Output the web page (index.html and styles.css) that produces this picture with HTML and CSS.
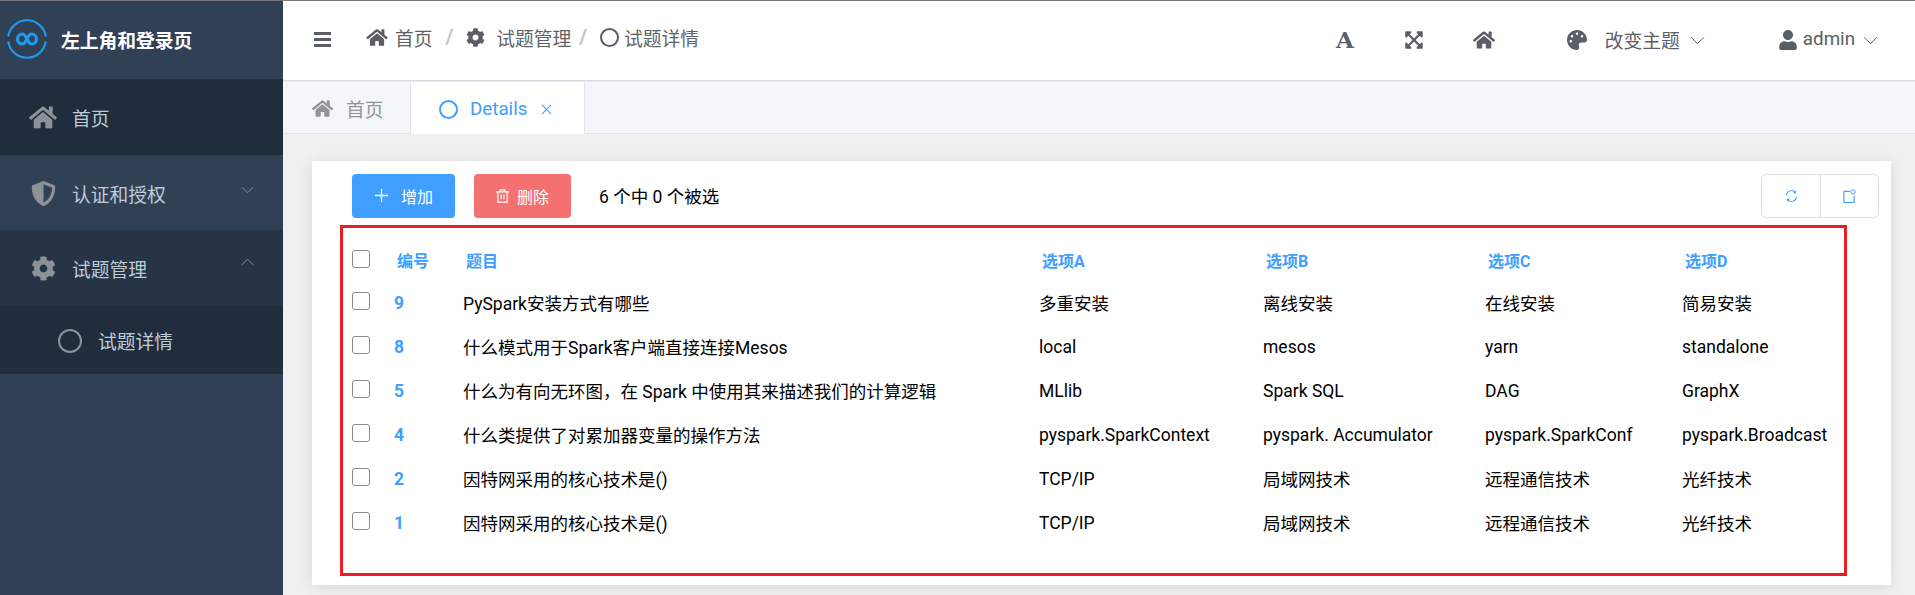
FILE: index.html
```html
<!DOCTYPE html>
<html lang="zh-CN">
<head>
  <meta charset="UTF-8" />
  <title>试题详情</title>
  <link rel="stylesheet" href="styles.css">
</head>
<body>
  <svg class="sprites" xmlns="http://www.w3.org/2000/svg">
    <symbol id="i-home" viewBox="0 0 576 512"><path d="M280.37 148.26L96 300.11V464a16 16 0 0 0 16 16l112.06-.29a16 16 0 0 0 15.92-16V368a16 16 0 0 1 16-16h64a16 16 0 0 1 16 16v95.64a16 16 0 0 0 16 16.05L464 480a16 16 0 0 0 16-16V300L295.67 148.26a12.19 12.19 0 0 0-15.3 0zM571.6 251.47L488 182.56V44.05a12 12 0 0 0-12-12h-56a12 12 0 0 0-12 12v72.61L318.47 43a48 48 0 0 0-61 0L4.34 251.47a12 12 0 0 0-1.6 16.9l25.5 31A12 12 0 0 0 45.15 301l235.22-193.74a12.19 12.19 0 0 1 15.3 0L530.9 301a12 12 0 0 0 16.9-1.6l25.5-31a12 12 0 0 0-1.7-16.93z"/></symbol>
    <symbol id="i-cog" viewBox="0 0 512 512"><path d="M487.4 315.7l-42.6-24.6c4.3-23.2 4.3-47 0-70.2l42.6-24.6c4.9-2.8 7.1-8.6 5.5-14-11.1-35.6-30-67.8-54.7-94.6-3.8-4.1-10-5.1-14.8-2.3L380.8 110c-17.9-15.4-38.5-27.3-60.8-35.1V25.8c0-5.6-3.9-10.5-9.4-11.7-36.7-8.2-74.3-7.8-109.2 0-5.5 1.2-9.4 6.1-9.4 11.7V75c-22.2 7.9-42.8 19.8-60.8 35.1L88.7 85.5c-4.9-2.8-11-1.9-14.8 2.3-24.7 26.7-43.6 58.9-54.7 94.6-1.7 5.4.6 11.2 5.5 14L67.3 221c-4.3 23.2-4.3 47 0 70.2l-42.6 24.6c-4.9 2.8-7.1 8.6-5.5 14 11.1 35.6 30 67.8 54.7 94.6 3.8 4.1 10 5.1 14.8 2.3l42.6-24.6c17.9 15.4 38.5 27.3 60.8 35.1v49.2c0 5.6 3.9 10.5 9.4 11.7 36.7 8.2 74.3 7.8 109.2 0 5.5-1.2 9.4-6.1 9.4-11.7v-49.2c22.2-7.9 42.8-19.8 60.8-35.1l42.6 24.6c4.9 2.8 11 1.9 14.8-2.3 24.7-26.7 43.6-58.9 54.7-94.6 1.5-5.5-.7-11.3-5.6-14.1zM256 336c-44.1 0-80-35.9-80-80s35.9-80 80-80 80 35.9 80 80-35.9 80-80 80z"/></symbol>
    <symbol id="i-shield" viewBox="0 0 512 512"><path d="M466.5 83.7l-192-80a48.15 48.15 0 0 0-36.9 0l-192 80C27.7 91.1 16 108.6 16 128c0 198.5 114.5 335.7 221.5 380.3 11.8 4.9 25.1 4.9 36.9 0C360.1 472.6 496 349.3 496 128c0-19.4-11.7-36.9-29.5-44.3zM256.1 446.3l-.1-381 175.9 73.3c-3.3 151.4-82.1 261.1-175.8 307.7z"/></symbol>
    <symbol id="i-chevron" viewBox="0 0 16 10"><path d="M1 1.5l7 7 7-7" fill="none" stroke="currentColor" stroke-width="1.1"/></symbol>
  </svg>

  <div class="topline"></div>
  <div class="app">
    <aside class="sidebar">
      <div class="logo">
        <svg class="logo-mark" viewBox="0 0 40 40">
          <path d="M1.2 17.500A19 19 0 0 1 38.800 17.500M38.800 22.500A19 19 0 0 1 1.200 22.500" fill="none" stroke="#1e9bf0" stroke-width="2"/>
          <path d="M20 20c-1.500-3-2.500-5-4.500-5a5 5 0 0 0 0 10c2 0 3-2 4.500-5s2.500-5 4.500-5a5 5 0 0 1 0 10c-2 0-3-2-4.500-5z" fill="none" stroke="#1e9bf0" stroke-width="3.200"/>
        </svg>
        <span class="logo-title">左上角和登录页</span>
      </div>
      <nav>
        <div class="menu-item active">
          <svg class="menu-icon home"><use href="#i-home"/></svg>
          <span>首页</span>
        </div>
        <div class="menu-item">
          <svg class="menu-icon"><use href="#i-shield"/></svg>
          <span>认证和授权</span>
          <svg class="menu-arrow"><use href="#i-chevron"/></svg>
        </div>
        <div class="menu-item open">
          <svg class="menu-icon"><use href="#i-cog"/></svg>
          <span>试题管理</span>
          <svg class="menu-arrow up"><use href="#i-chevron"/></svg>
        </div>
        <div class="menu-sub">
          <span class="ring"></span>
          <span>试题详情</span>
        </div>
      </nav>
    </aside>

    <main class="main">
      <header class="navbar">
        <div class="hamburger"><i></i><i></i><i></i></div>
        <div class="crumbs">
          <svg class="crumb-home"><use href="#i-home"/></svg>
          <span class="crumb-text">首页</span>
          <span class="crumb-sep">/</span>
          <svg class="crumb-cog"><use href="#i-cog"/></svg>
          <span class="crumb-text cog-text">试题管理</span>
          <span class="crumb-sep sep-2">/</span>
          <span class="crumb-ring"></span>
          <span class="crumb-text ring-text">试题详情</span>
        </div>
        <div class="nav-right">
          <span class="font-btn">A</span>
          <svg class="nav-icon expand" viewBox="0 0 448 512"><path d="M448 344v112a23.94 23.94 0 0 1-24 24H312c-21.39 0-32.09-25.9-17-41l36.2-36.2L224 295.6 116.77 402.9 153 439c15.09 15.1 4.39 41-17 41H24a23.94 23.94 0 0 1-24-24V344c0-21.4 25.89-32.1 41-17l36.19 36.2L184.46 256 77.18 148.7 41 185c-15.1 15.1-41 4.4-41-17V56a23.94 23.94 0 0 1 24-24h112c21.39 0 32.09 25.9 17 41l-36.2 36.2L224 216.4l107.23-107.3L295 73c-15.09-15.1-4.39-41 17-41h112a23.94 23.94 0 0 1 24 24v112c0 21.4-25.89 32.1-41 17l-36.19-36.2L263.54 256l107.28 107.3L407 327.1c15.1-15.2 41-4.5 41 16.9z"/></svg>
          <svg class="nav-icon nav-home"><use href="#i-home"/></svg>
          <svg class="nav-icon palette" viewBox="0 0 512 512"><path d="M204.3 5C104.9 24.4 24.8 104.3 5.2 203.4c-37 187 131.7 326.4 258.8 306.7 41.2-6.4 61.4-54.6 42.5-91.7-23.1-45.4 9.9-98.4 60.9-98.4h79.7c35.8 0 64.8-29.6 64.9-65.3C511.5 97.1 368.1-26.9 204.3 5zM96 320c-17.7 0-32-14.3-32-32s14.3-32 32-32 32 14.3 32 32-14.3 32-32 32zm32-128c-17.7 0-32-14.3-32-32s14.3-32 32-32 32 14.3 32 32-14.3 32-32 32zm128-64c-17.7 0-32-14.3-32-32s14.3-32 32-32 32 14.3 32 32-14.3 32-32 32zm128 64c-17.7 0-32-14.3-32-32s14.3-32 32-32 32 14.3 32 32-14.3 32-32 32z"/></svg>
          <span class="nav-text theme">改变主题</span>
          <svg class="nav-arrow theme-arrow"><use href="#i-chevron"/></svg>
          <svg class="nav-icon user" viewBox="0 0 448 512"><path d="M224 256c70.700 0 128-57.300 128-128S294.700 0 224 0 96 57.300 96 128s57.300 128 128 128zm89.600 32h-16.700c-22.200 10.200-46.900 16-72.900 16s-50.600-5.800-72.900-16h-16.700C60.200 288 0 348.200 0 422.400V464c0 26.500 21.500 48 48 48h352c26.500 0 48-21.500 48-48v-41.600c0-74.200-60.200-134.400-134.400-134.400z"/></svg>
          <span class="nav-text admin">admin</span>
          <svg class="nav-arrow"><use href="#i-chevron"/></svg>
        </div>
      </header>

      <div class="tabs">
        <div class="tab">
          <svg class="tab-home"><use href="#i-home"/></svg>
          <span>首页</span>
        </div>
        <div class="tab current">
          <span class="tab-ring"></span>
          <span>Details</span>
          <svg class="tab-close" viewBox="0 0 12 12"><path d="M1 1l10 10M11 1L1 11" stroke="currentColor" stroke-width="1.1"/></svg>
        </div>
      </div>

      <section class="content">
        <div class="card">
          <div class="toolbar">
            <button class="btn btn-add">
              <svg class="btn-icon" viewBox="0 0 14 14"><path d="M7 0v14M0 7h14" stroke="#fff" stroke-width="1.4"/></svg>
              <span>增加</span>
            </button>
            <button class="btn btn-del">
              <svg class="btn-icon" viewBox="0 0 14 15"><path d="M0 3h14M4.500 3V1h5v2M2 3v11h10V3M5.500 6v5M8.500 6v5" fill="none" stroke="#fff" stroke-width="1.300"/></svg>
              <span>删除</span>
            </button>
            <span class="selected">6 个中 0 个被选</span>
            <div class="tools">
              <button class="tool">
                <svg viewBox="0 0 14 14"><path d="M1.500 6A5.500 5.500 0 0 1 11 3M12.500 8A5.500 5.500 0 0 1 3 11" fill="none" stroke="#409eff" stroke-width="1.100"/><path d="M11.800 0.800v3.200H8.600zM2.200 13.200V10h3.200z" fill="#409eff"/></svg>
              </button>
              <button class="tool">
                <svg viewBox="0 0 14 15"><path d="M7.500 2.500H1v12h11V7" fill="none" stroke="#409eff" stroke-width="1.200"/><circle cx="10.800" cy="3" r="2.300" fill="none" stroke="#409eff" stroke-width="1"/></svg>
              </button>
            </div>
          </div>

          <div class="table-box">
            <table class="list">
              <colgroup>
                <col class="c-check"><col class="c-id"><col class="c-title"><col class="c-a"><col class="c-b"><col class="c-c"><col class="c-d">
              </colgroup>
              <thead>
                <tr>
                  <th><input type="checkbox" class="check"></th>
                  <th>编号</th><th>题目</th><th>选项A</th><th>选项B</th><th>选项C</th><th>选项D</th>
                </tr>
              </thead>
              <tbody>
                <tr>
                  <td><input type="checkbox" class="check"></td>
                  <td class="num">9</td><td>PySpark安装方式有哪些</td><td>多重安装</td><td>离线安装</td><td>在线安装</td><td>简易安装</td>
                </tr>
                <tr>
                  <td><input type="checkbox" class="check"></td>
                  <td class="num">8</td><td>什么模式用于Spark客户端直接连接Mesos</td><td>local</td><td>mesos</td><td>yarn</td><td>standalone</td>
                </tr>
                <tr>
                  <td><input type="checkbox" class="check"></td>
                  <td class="num">5</td><td>什么为有向无环图，在 Spark 中使用其来描述我们的计算逻辑</td><td>MLlib</td><td>Spark SQL</td><td>DAG</td><td>GraphX</td>
                </tr>
                <tr>
                  <td><input type="checkbox" class="check"></td>
                  <td class="num">4</td><td>什么类提供了对累加器变量的操作方法</td><td>pyspark.SparkContext</td><td>pyspark. Accumulator</td><td>pyspark.SparkConf</td><td>pyspark.Broadcast</td>
                </tr>
                <tr>
                  <td><input type="checkbox" class="check"></td>
                  <td class="num">2</td><td>因特网采用的核心技术是()</td><td>TCP/IP</td><td>局域网技术</td><td>远程通信技术</td><td>光纤技术</td>
                </tr>
                <tr>
                  <td><input type="checkbox" class="check"></td>
                  <td class="num">1</td><td>因特网采用的核心技术是()</td><td>TCP/IP</td><td>局域网技术</td><td>远程通信技术</td><td>光纤技术</td>
                </tr>
              </tbody>
            </table>
          </div>
        </div>
      </section>
    </main>
  </div>
</body>
</html>
```

FILE: styles.css
```css
* {
  box-sizing: border-box;
}
html, body {
  height: 595px;
  overflow: hidden;
}
body {
  margin: 0;
  font-family: Roboto, "Noto Sans CJK SC", sans-serif;
  font-size: 17.5px;
  background: #f0f0f0;
}
.sprites {
  display: none;
}
svg {
  fill: currentColor;
  flex: none;
}
.topline {
  height: 1px;
  background: #777;
}
.app {
  display: flex;
  height: 594px;
}

/* sidebar */
.sidebar {
  width: 283px;
  flex: none;
  background: #304156;
}
.logo {
  height: 78px;
  display: flex;
  align-items: center;
  padding: 0 0 2px 7px;
}
.logo-mark {
  width: 40px;
  height: 40px;
}
.logo-title {
  margin-left: 14px;
  color: #fff;
  font-size: 18.75px;
  font-weight: 700;
}
.menu-item {
  height: 75.500px;
  display: flex;
  align-items: center;
  padding: 2px 0 0 32px;
  color: #bfcbd9;
  font-size: 18.75px;
}
.menu-item.active {
  background: #1f2d3d;
}
.menu-item.open {
  background: #263445;
}
.menu-icon {
  width: 25px;
  height: 25px;
  margin-left: -1px;
  margin-right: 16px;
  color: #8d9299;
}
.menu-icon.home {
  width: 28px;
  margin-left: -3px;
  margin-right: 15px;
}
.menu-arrow {
  width: 13px;
  height: 8px;
  margin-left: auto;
  margin-right: 29px;
  color: #8d97a5;
  margin-top: -6px;
}
.menu-arrow.up {
  transform: rotate(180deg);
  margin-top: -14px;
}
.menu-sub {
  height: 68px;
  display: flex;
  align-items: center;
  padding: 2px 0 0 58px;
  background: #1f2d3d;
  color: #bfcbd9;
  font-size: 18.75px;
}
.ring {
  width: 24px;
  height: 24px;
  margin-right: 16px;
  border: 2px solid #8d9299;
  border-radius: 50%;
}

/* navbar */
.main {
  flex: 1;
  min-width: 0;
}
.navbar {
  height: 80px;
  display: flex;
  align-items: center;
  padding-left: 31px;
  background: #fff;
  border-bottom: 1px solid #d8dce5;
  color: #5a5e66;
  font-size: 18.75px;
}
.hamburger {
  width: 17px;
  margin-top: 1px;
}
.hamburger i {
  display: block;
  height: 3px;
  margin-bottom: 3px;
  background: #5a5e66;
}
.crumbs {
  display: flex;
  align-items: center;
  margin-top: -7px;
  margin-left: 35px;
}
.crumb-home {
  width: 22px;
  height: 19px;
}
.crumb-text {
  margin-left: 7px;
  color: #606266;
}
.crumb-sep {
  margin-left: 13px;
  color: #c0c4cc;
  font-size: 21px;
  font-weight: 700;
}
.crumb-cog {
  width: 19px;
  height: 19px;
  margin-left: 13px;
}
.cog-text {
  margin-left: 11px;
}
.sep-2 {
  margin-left: 8px;
}
.crumb-ring {
  width: 19px;
  height: 19px;
  margin-left: 13px;
  border: 2px solid #5a5e66;
  border-radius: 50%;
}
.ring-text {
  margin-left: 5px;
}
.nav-right {
  display: flex;
  align-items: center;
  margin-left: auto;
  margin-top: -1px;
  padding-right: 37px;
}
.font-btn {
  width: 20px;
  font-family: "DejaVu Serif", serif;
  font-size: 23px;
  font-weight: 700;
  line-height: 24px;
  text-align: center;
}
.nav-icon {
  height: 20px;
}
.nav-text {
  margin-bottom: 2px;
}
.expand {
  width: 18px;
  margin-left: 50px;
}
.nav-home {
  width: 22px;
  margin-left: 50px;
}
.palette {
  width: 20px;
  margin-left: 72px;
}
.theme {
  margin-left: 18px;
}
.nav-arrow {
  width: 15px;
  height: 9px;
  margin-left: 8px;
  color: #5a5e66;
}
.theme-arrow {
  margin-left: 10px;
}
.user {
  width: 18px;
  margin-left: 74px;
}
.admin {
  margin-left: 6px;
}

/* tabs */
.tabs {
  height: 53px;
  display: flex;
  background: #f5f6fa;
  border-top: 1px solid #e9ebf1;
  border-bottom: 1px solid #dfe4ed;
}
.tab {
  width: 127px;
  display: flex;
  align-items: center;
  padding: 2px 0 0 29px;
  color: #909399;
  font-size: 18.75px;
}
.tab.current {
  width: 175px;
  padding-left: 28px;
  margin-bottom: -1px;
  background: #fff;
  color: #409eff;
  border-left: 1px solid #dfe4ed;
  border-right: 1px solid #dfe4ed;
}
.tab-home {
  width: 21px;
  height: 19px;
  margin-right: 13px;
}
.tab-ring {
  width: 19px;
  height: 19px;
  margin-right: 12px;
  border: 2px solid #409eff;
  border-radius: 50%;
}
.tab-close {
  width: 11px;
  height: 11px;
  margin-left: 14px;
}

/* card */
.content {
  padding: 27px 24px 0 29px;
}
.card {
  height: 424px;
  padding-top: 13px;
  background: #fff;
  box-shadow: 0 2px 14px rgba(0, 0, 0, 0.1);
}
.toolbar {
  height: 44px;
  display: flex;
  align-items: center;
  padding: 0 12px 0 40px;
}
.btn {
  height: 44px;
  display: flex;
  align-items: center;
  padding-bottom: 2px;
  border: none;
  border-radius: 4px;
  color: #fff;
  font-family: inherit;
  font-size: 16px;
}
.btn-add {
  width: 103px;
  padding-left: 23px;
  background: #409eff;
}
.btn-add .btn-icon {
  width: 13px;
  height: 13px;
  margin-right: 13px;
}
.btn-del {
  width: 97px;
  margin-left: 19px;
  padding-left: 22px;
  background: #f56c6c;
  opacity: 0.97;
}
.btn-del .btn-icon {
  width: 13px;
  height: 14px;
  margin-right: 8px;
}
.selected {
  margin-left: 28px;
  margin-bottom: 2px;
  color: #000;
}
.tools {
  display: flex;
  margin-left: auto;
  height: 44px;
  border: 1.500px solid #dcdfe6;
  border-radius: 5px;
}
.tool {
  width: 58px;
  display: flex;
  align-items: center;
  justify-content: center;
  padding: 0;
  border: none;
  background: none;
}
.tool + .tool {
  border-left: 1.500px solid #dcdfe6;
}
.tool svg {
  width: 13px;
  height: 14px;
}

/* red box with the table */
.table-box {
  height: 351px;
  margin: 7px 44px 0 28px;
  padding-top: 9px;
  border: 3px solid #ed1c24;
}
.list {
  width: 1500px;
  border-collapse: collapse;
  table-layout: fixed;
}
.c-check { width: 42px; }
.c-id { width: 69px; }
.c-title { width: 576px; }
.c-a { width: 224px; }
.c-b { width: 222px; }
.c-c { width: 197px; }
.c-d { width: 170px; }
.list th, .list td {
  height: 44px;
  padding: 0 0 1px 9px;
  text-align: left;
  white-space: nowrap;
  overflow: hidden;
  color: #000;
  font-weight: 400;
}
.list th {
  padding: 2px 0 0 12px;
  color: #409eff;
  font-size: 16px;
  font-weight: 700;
}
.list th:first-child {
  padding: 0 0 0 9px;
}
.list td.num {
  color: #409eff;
  font-weight: 700;
}
.check {
  appearance: none;
  display: block;
  width: 18px;
  height: 18px;
  margin: 0 0 4px;
  background: #fff;
  border: 1.500px solid #8a8a8a;
  border-radius: 3px;
}
.list th .check {
  margin: 0;
}
```
